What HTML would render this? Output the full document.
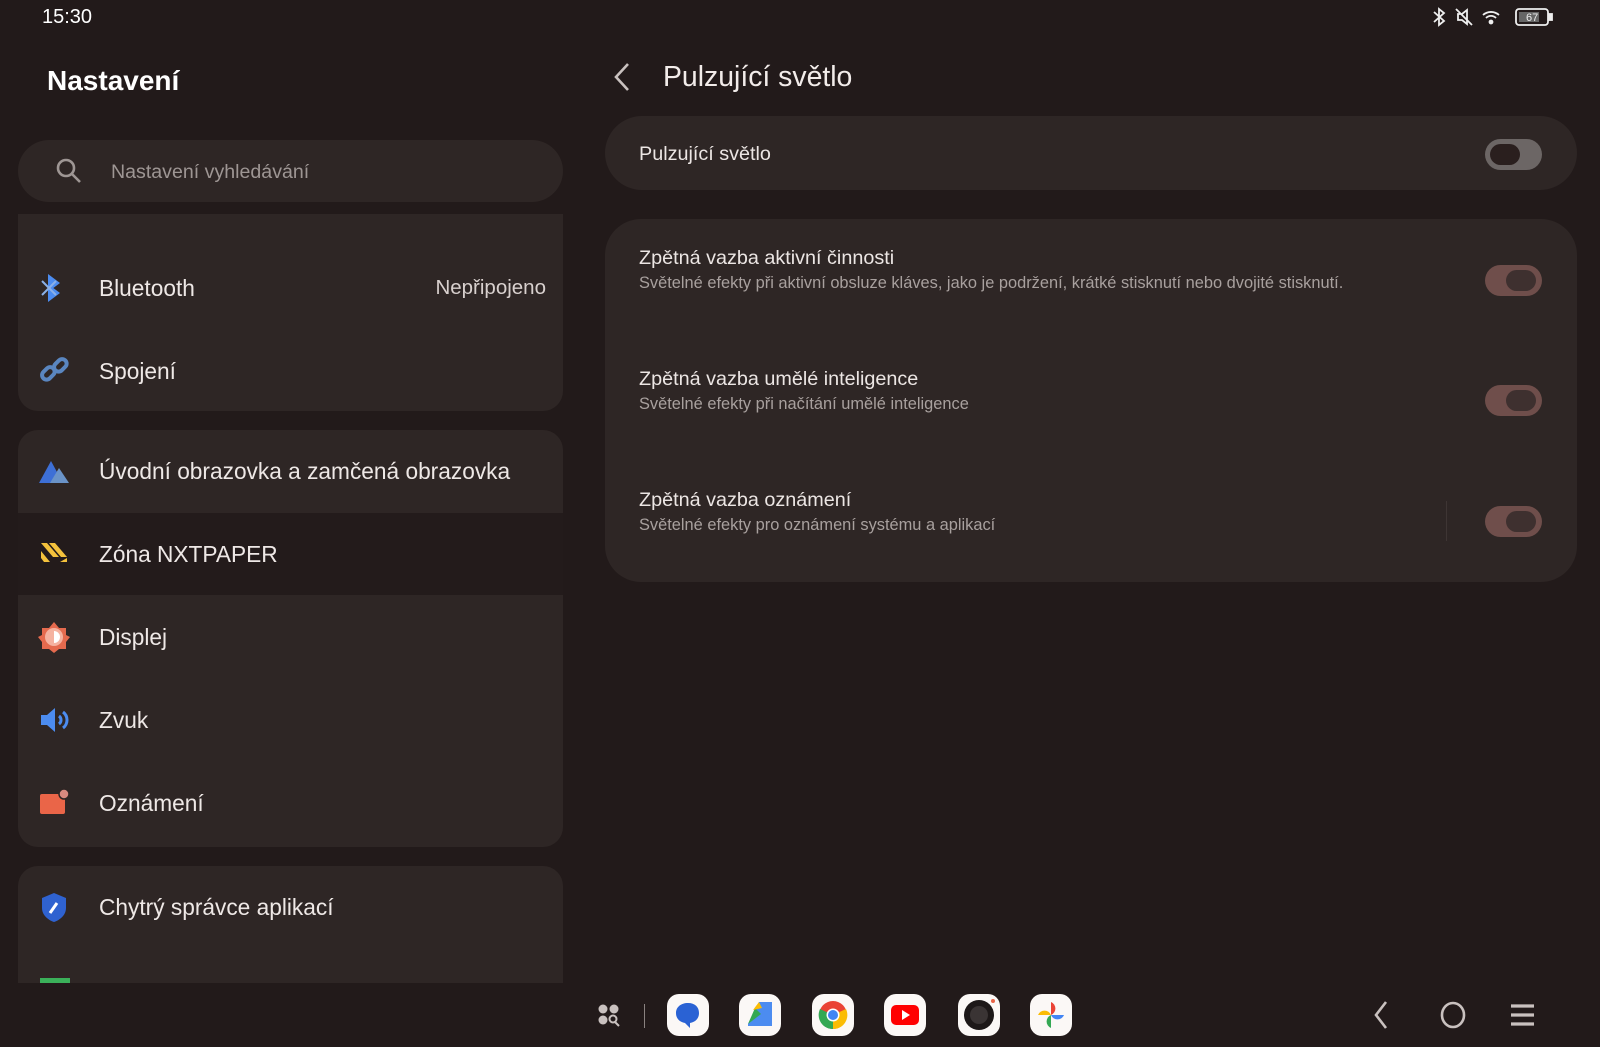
<!DOCTYPE html>
<html><head><meta charset="utf-8"><style>
*{margin:0;padding:0;box-sizing:border-box}
body{width:1600px;height:1047px;background:#221a1a;font-family:"Liberation Sans",sans-serif;color:#ece6e4;position:relative;overflow:hidden}
.a{position:absolute}
.card{position:absolute;background:#2e2625}
.row{position:absolute;left:0;right:0;height:82px;display:flex;align-items:center}
.row .ic{position:absolute;left:20px;width:32px;height:32px;top:25px}
.row .t{position:absolute;left:81px;top:28px;font-size:22.7px;color:#eee8e6}
.tog{position:absolute;width:57px;height:31px;border-radius:16px}
.tog i{position:absolute;top:5px;width:30px;height:21px;border-radius:11px}
.off{background:#6c6665}.off i{left:5px;background:#2a1f1e}
.on{background:#6f4e4b}.on i{right:6px;background:#3e302f}
.ti{position:absolute;left:34px;font-size:19.8px;color:#ece6e4}
.su{position:absolute;left:34px;font-size:16.4px;color:#a8a09e}
.dk{position:absolute;top:994px;width:42px;height:42px;border-radius:12px;background:#fbf8f6}
</style></head><body>
<div class="a" style="left:42px;top:6px;font-size:20px;color:#fff">15:30</div>
<svg class="a" style="left:1430px;top:6px" width="130" height="22" viewBox="0 0 130 22" fill="none" stroke="#eee" stroke-width="1.8">
<path d="M4 6l10 9-5 4V3l5 4-10 9"/>
<path d="M28 8h4l5-4v14l-5-4h-4z M26 3l16 16" />
<path d="M53 9a12 12 0 0 1 16 0M56 12a7 7 0 0 1 10 0"/><circle cx="61" cy="16" r="1.5" fill="#eee"/>
<rect x="86" y="3" width="32" height="16" rx="3"/><rect x="119" y="8" width="3" height="6" fill="#eee"/>
<rect x="89" y="6" width="20" height="10" fill="#666" stroke="none"/>
<text x="96" y="15" font-size="11" fill="#eee" stroke="none" font-family="Liberation Sans">67</text>
</svg>

<div class="a" style="left:47px;top:65px;font-size:28px;font-weight:bold;color:#fff">Nastavení</div>
<div class="a" style="left:18px;top:140px;width:545px;height:62px;border-radius:31px;background:#2e2625"></div>
<svg class="a" style="left:55px;top:157px" width="28" height="28" viewBox="0 0 28 28" fill="none" stroke="#9e9694" stroke-width="2.6"><circle cx="11" cy="11" r="8"/><path d="M17 17l8 8"/></svg>
<div class="a" style="left:111px;top:161px;font-size:19.6px;color:#9e9694">Nastavení vyhledávání</div>

<div style="position:absolute;left:0;top:214px;width:600px;height:769px;overflow:hidden">
<div class="card" style="left:18px;top:0;width:545px;height:197px;border-radius:0 0 20px 20px">
 <div class="row" style="top:33px"><svg class="ic" viewBox="0 0 32 32"><path d="M10 2l12 9-12 9V2z M10 12l12 9-12 9V12z" fill="#4c8cf0"/><path d="M4 9l14 14M4 23l14-14" stroke="#8ab0e8" stroke-width="2"/></svg><span class="t">Bluetooth</span><span style="position:absolute;right:17px;top:29px;font-size:20.5px;color:#d8d0ce">Nepřipojeno</span></div>
 <div class="row" style="top:116px"><svg class="ic" viewBox="0 0 32 32" fill="none" stroke="#5a86c0" stroke-width="4"><rect x="3" y="14" width="14" height="9" rx="4.5" transform="rotate(-45 10 18)"/><rect x="15" y="6" width="14" height="9" rx="4.5" transform="rotate(-45 22 10)"/></svg><span class="t">Spojení</span></div>
</div>
<div class="card" style="left:18px;top:216px;width:545px;height:417px;border-radius:20px">
 <div class="row" style="top:0"><svg class="ic" viewBox="0 0 32 32"><path d="M1 28L13 6l12 22z" fill="#3d6fd6"/><path d="M12 28l9-15 10 15z" fill="#6a93c8"/></svg><span class="t">Úvodní obrazovka a zamčená obrazovka</span></div>
 <div class="row" style="top:83px;background:#231b1b"><svg class="ic" viewBox="0 0 32 32" fill="#f4c23c"><path d="M3 5h6l12 14h-6z M11 5h6l12 14h-6z M3 13l9 11h-6l-3-4z M22 24h7v-4z"/></svg><span class="t">Zóna NXTPAPER</span></div>
 <div class="row" style="top:166px"><svg class="ic" viewBox="0 0 32 32"><path d="M16 1l5 6h7v7l4 2-4 5v7h-7l-5 4-5-4H4v-7l-4-5 4-2V7h7z" fill="#e56a4e"/><circle cx="16" cy="16" r="9" fill="#f5b2a0"/><path d="M16 10a6 6 0 0 1 0 12z" fill="#fff"/></svg><span class="t">Displej</span></div>
 <div class="row" style="top:249px"><svg class="ic" viewBox="0 0 32 32"><path d="M3 11h6l8-7v24l-8-7H3z" fill="#4c8cf0"/><path d="M21 12a5 5 0 0 1 0 8M25 8a10 10 0 0 1 0 16" stroke="#4c8cf0" stroke-width="3" fill="none"/></svg><span class="t">Zvuk</span></div>
 <div class="row" style="top:332px"><svg class="ic" viewBox="0 0 32 32"><rect x="2" y="7" width="25" height="20" rx="2" fill="#ea6548"/><circle cx="26" cy="7" r="5" fill="#d88a80" stroke="#2e2625" stroke-width="1.5"/></svg><span class="t">Oznámení</span></div>
</div>
<div class="card" style="left:18px;top:652px;width:545px;height:200px;border-radius:20px">
 <div class="row" style="top:0"><svg class="ic" viewBox="0 0 32 32"><path d="M16 2l12 5v10c0 7-6 12-12 14C10 29 4 24 4 17V7z" fill="#2f62d0"/><path d="M12 22l7-10" stroke="#fff" stroke-width="3"/></svg><span class="t">Chytrý správce aplikací</span></div>
 <div class="a" style="left:22px;top:112px;width:30px;height:8px;background:#3bb05a"></div>
</div>
</div>

<svg class="a" style="left:610px;top:62px" width="24" height="30" viewBox="0 0 24 30" fill="none" stroke="#c9c1bf" stroke-width="2.6"><path d="M18 2L6 15l12 13"/></svg>
<div class="a" style="left:663px;top:61px;font-size:28.4px;color:#f2ecea">Pulzující světlo</div>
<div class="card" style="left:605px;top:116px;width:972px;height:74px;border-radius:37px">
 <div class="ti" style="top:27px">Pulzující světlo</div>
 <div class="tog off" style="left:880px;top:23px"><i></i></div>
</div>
<div class="card" style="left:605px;top:219px;width:972px;height:363px;border-radius:36px">
 <div class="ti" style="top:28px">Zpětná vazba aktivní činnosti</div>
 <div class="su" style="top:55px">Světelné efekty při aktivní obsluze kláves, jako je podržení, krátké stisknutí nebo dvojité stisknutí.</div>
 <div class="tog on" style="left:880px;top:46px"><i></i></div>
 <div class="ti" style="top:149px">Zpětná vazba umělé inteligence</div>
 <div class="su" style="top:176px">Světelné efekty při načítání umělé inteligence</div>
 <div class="tog on" style="left:880px;top:166px"><i></i></div>
 <div class="ti" style="top:270px">Zpětná vazba oznámení</div>
 <div class="su" style="top:297px">Světelné efekty pro oznámení systému a aplikací</div>
 <div class="a" style="left:841px;top:282px;width:1px;height:40px;background:#3e3534"></div>
 <div class="tog on" style="left:880px;top:287px"><i></i></div>
</div>

<svg class="a" style="left:596px;top:1002px" width="30" height="30" viewBox="0 0 30 30" fill="#c9c1bf"><circle cx="7" cy="7" r="4.5"/><circle cx="18" cy="7" r="4.5"/><circle cx="7" cy="18" r="4.5"/><circle cx="17" cy="17" r="3.5" fill="none" stroke="#c9c1bf" stroke-width="2"/><path d="M19 20l4 4" stroke="#c9c1bf" stroke-width="2"/></svg>
<div class="a" style="left:644px;top:1004px;width:1px;height:24px;background:#8a8280"></div>
<div class="dk" style="left:667px"><svg width="42" height="42" viewBox="0 0 42 42"><path d="M21 9c7 0 11 4 11 10s-4 9-9 10v5l-5-5c-5-1-9-4-9-10s5-10 12-10z" fill="#2a62d4"/></svg></div>
<div class="dk" style="left:739px"><svg width="42" height="42" viewBox="0 0 42 42"><path d="M9 30L20 8h13v24H9z" fill="#4c8cf0"/><path d="M9 30l7-16 6 6" fill="#34a853"/><path d="M14 16l6-8 3 6z" fill="#fbbc04"/></svg></div>
<div class="dk" style="left:812px"><svg width="42" height="42" viewBox="0 0 42 42"><circle cx="21" cy="21" r="14" fill="#ea4335"/><path d="M21 21L8 15a14 14 0 0 0 13 20z" fill="#34a853"/><path d="M21 21l13-6a14 14 0 0 1-13 20z" fill="#fbbc04"/><circle cx="21" cy="21" r="6.5" fill="#fff"/><circle cx="21" cy="21" r="5" fill="#4285f4"/></svg></div>
<div class="dk" style="left:884px"><svg width="42" height="42" viewBox="0 0 42 42"><rect x="7" y="11" width="28" height="20" rx="5" fill="#ff0000"/><path d="M18 16v10l8-5z" fill="#fff"/></svg></div>
<div class="dk" style="left:958px"><svg width="42" height="42" viewBox="0 0 42 42"><circle cx="21" cy="21" r="15" fill="#1d1818"/><circle cx="21" cy="21" r="9" fill="#3a3434"/><circle cx="35" cy="7" r="2" fill="#ea6548"/></svg></div>
<div class="dk" style="left:1030px"><svg width="42" height="42" viewBox="0 0 42 42"><path d="M21 21V8a7 7 0 0 1 0 13z" fill="#ea4335"/><path d="M21 21h13a7 7 0 0 1-13 0z" fill="#4285f4"/><path d="M21 21v13a7 7 0 0 1 0-13z" fill="#34a853"/><path d="M21 21H8a7 7 0 0 1 13 0z" fill="#fbbc04"/></svg></div>
<svg class="a" style="left:1368px;top:999px" width="200" height="32" viewBox="0 0 200 32" fill="none" stroke="#c9c1bf" stroke-width="2.6"><path d="M18 3L8 16l10 13"/><ellipse cx="85" cy="16" rx="11" ry="12"/><path d="M143 7h23M143 16h23M143 25h23" stroke-width="3.2"/></svg>
</body></html>
